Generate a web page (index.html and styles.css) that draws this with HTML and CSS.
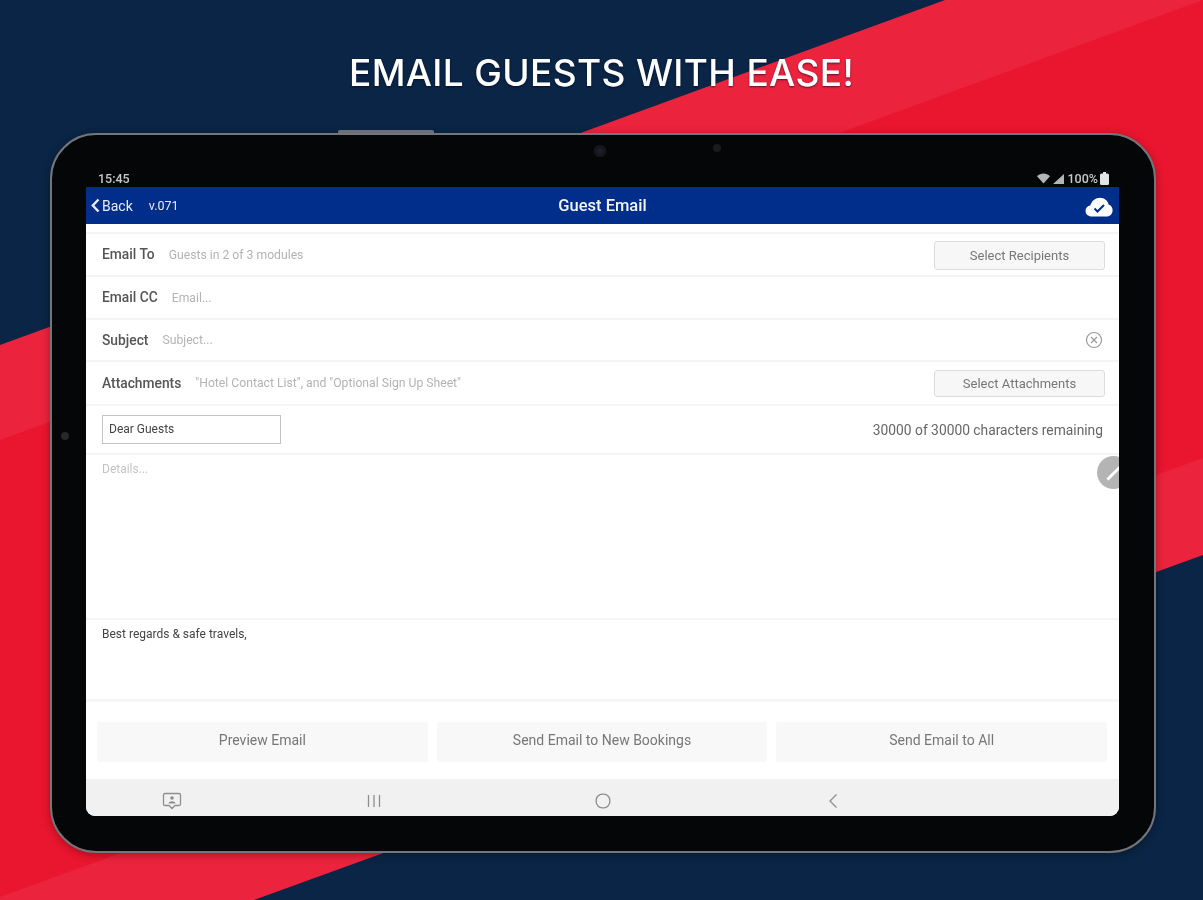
FILE: index.html
```html
<!DOCTYPE html>
<html lang="en">
<head>
<meta charset="utf-8">
<title>Email Guests With Ease</title>
<link rel="stylesheet" href="styles.css">
</head>
<body>
<div class="stage">
  <svg class="backdrop" width="1203" height="900" viewBox="0 0 1203 900" aria-hidden="true">
    <rect class="navy" width="1203" height="900"/>
    <polygon class="red-light" points="945,0 1203,0 1203,555 254,900 0,900 0,345"/>
    <polygon class="red-dark" points="1203,0 1203,458 0,897 0,440"/>
  </svg>
  <h1 class="headline">EMAIL GUESTS WITH EASE!</h1>
  <div class="tablet">
    <span class="side-key"></span>
    <span class="camera"></span>
    <span class="sensor"></span>
    <span class="side-dot"></span>
    <div class="status">
      <span class="time">15:45</span>
      <div class="status-right">
        <svg class="wifi" width="13" height="11" viewBox="0 0 13 11"><path d="M0 3.2C3.6-.4 9.4-.4 13 3.2L6.5 10.5Z"/></svg>
        <svg class="signal" width="11" height="10" viewBox="0 0 11 10"><path d="M11 0V10H0Z"/></svg>
        <span class="pct">100%</span>
        <svg class="battery" width="9" height="13" viewBox="0 0 9 13"><path d="M3 0H6V1.500H7.500Q9 1.500 9 3V11.500Q9 13 7.500 13H1.500Q0 13 0 11.500V3Q0 1.500 1.500 1.500H3Z"/></svg>
      </div>
    </div>
    <div class="screen">
      <header class="appbar">
        <div class="appbar-left">
          <svg class="chevron" width="9" height="15" viewBox="0 0 9 15"><path d="M7.500 1.500 1.800 7.500 7.500 13.500"/></svg>
          <span class="back">Back</span>
          <span class="version">v.071</span>
        </div>
        <div class="appbar-title">Guest Email</div>
        <div class="appbar-right">
          <svg width="28" height="20" viewBox="0 0 28 20"><path class="cloud" d="M7 19.500C3 19.500.5 17 .5 14c0-2.800 2-5 4.800-5.400C6.500 4 10.500.8 15 .8c4.300 0 7.600 2.800 8.600 6.700 2.500.8 4 3 4 5.700 0 3.500-2.500 6.300-6 6.300Z"/><path class="cloud-check" d="M9.500 11.500l3 3 6.500-6.500"/></svg>
        </div>
      </header>
      <div class="top-gap"></div>
      <div class="row row-a">
        <span class="label">Email To</span>
        <span class="value">Guests in 2 of 3 modules</span>
        <button class="pick pick-a">Select Recipients</button>
      </div>
      <div class="row row-a">
        <span class="label">Email CC</span>
        <span class="value">Email...</span>
      </div>
      <div class="row row-b">
        <span class="label">Subject</span>
        <span class="value">Subject...</span>
        <svg class="clear" width="18" height="18" viewBox="0 0 18 18"><circle cx="9" cy="9" r="7.500"/><path d="M6 6l6 6M12 6l-6 6"/></svg>
      </div>
      <div class="row row-c">
        <span class="label">Attachments</span>
        <span class="value">"Hotel Contact List", and "Optional Sign Up Sheet"</span>
        <button class="pick pick-b">Select Attachments</button>
      </div>
      <div class="row row-d">
        <div class="greeting">Dear Guests</div>
        <span class="remaining">30000 of 30000 characters remaining</span>
      </div>
      <div class="details">Details...</div>
      <div class="signature">Best regards &amp; safe travels,</div>
      <div class="actions">
        <button class="action">Preview Email</button>
        <button class="action">Send Email to New Bookings</button>
        <button class="action">Send Email to All</button>
      </div>
      <nav class="navbar">
        <span class="nav-cell nav-1"><svg width="20" height="18" viewBox="0 0 20 18"><path class="nav-stroke" d="M3 1.500H17Q18.500 1.500 18.500 3V12Q18.500 13.500 17 13.500H13L10 16.500 7 13.500H3Q1.500 13.500 1.500 12V3Q1.500 1.500 3 1.500Z"/><circle class="nav-fill" cx="10" cy="6" r="1.800"/><path class="nav-fill" d="M6.500 11.500C7 8.500 13 8.500 13.500 11.500Z"/></svg></span>
        <span class="nav-cell nav-2"><svg width="16" height="14" viewBox="0 0 16 14"><path class="nav-stroke" d="M2.500 1V13M8 1V13M13.500 1V13"/></svg></span>
        <span class="nav-cell nav-3"><svg width="16" height="16" viewBox="0 0 16 16"><rect class="nav-stroke" x="1.200" y="1.200" width="13.600" height="13.600" rx="6"/></svg></span>
        <span class="nav-cell nav-4"><svg width="10" height="16" viewBox="0 0 10 16"><path class="nav-stroke" d="M8.500 1.500 2 8l6.500 6.500"/></svg></span>
      </nav>
      <div class="fab"><svg width="18" height="18" viewBox="0 0 18 18"><path class="fab-bar" d="M2.500 15.500 15 3"/></svg></div>
    </div>
  </div>
</div>
</body>
</html>
```
FILE: styles.css
```css
* { box-sizing: border-box; }
html, body { margin: 0; padding: 0; }
body { font-family: Roboto, "Liberation Sans", sans-serif; background: #0a2545; }
.stage { position: relative; width: 1203px; height: 900px; overflow: hidden; padding-top: 51px; }
.backdrop { position: absolute; left: 0; top: 0; }
.navy { fill: #0a2545; }
.red-light { fill: #ec233d; }
.red-dark { fill: #ea152e; }

.headline {
  position: relative;
  margin: 0;
  height: 43px;
  line-height: 43px;
  text-align: center;
  font-family: Inter, "Open Sans", sans-serif;
  font-weight: 500;
  font-size: 37px;
  letter-spacing: .35px;
  color: #fff;
  text-shadow: 0 1px 2px rgba(0, 0, 40, .6);
  filter: blur(.4px);
}

.tablet {
  position: relative;
  width: 1106px;
  height: 720px;
  margin: 39px 0 0 50px;
  border: 2px solid #72767b;
  border-radius: 46px;
  background: #050607;
  box-shadow: 0 2px 8px rgba(0, 0, 0, .3);
}
.side-key { position: absolute; left: 286px; top: -5px; width: 96px; height: 3px; background: #6d7176; border-radius: 2px 2px 0 0; }
.camera { position: absolute; left: 542px; top: 10px; width: 12px; height: 12px; border-radius: 50%; background: #1c1c2c; box-shadow: inset 0 0 0 3px #16161d; }
.sensor { position: absolute; left: 661px; top: 9px; width: 8px; height: 8px; border-radius: 50%; background: #1b1b1d; }
.side-dot { position: absolute; left: 9px; top: 297px; width: 8px; height: 8px; border-radius: 50%; background: #26282a; }

.status {
  display: flex;
  justify-content: space-between;
  align-items: center;
  height: 17px;
  margin: 35px 0 0 46px;
  padding-right: 45px;
  color: #c9c9c9;
  font-size: 12.500px;
  filter: blur(.6px);
}
.status-right { display: flex; align-items: center; gap: 3px; }
.wifi, .signal, .battery { fill: #b5b5b5; }
.battery { fill: #e4e4e4; margin-left: -1px; }
.pct { font-weight: 500; }
.time { font-weight: 500; }

.screen {
  position: relative;
  width: 1033px;
  height: 629px;
  margin-left: 34px;
  background: #fff;
  border-radius: 0 0 9px 9px;
  overflow: hidden;
}
.screen > * { filter: blur(.6px); }

.appbar {
  display: grid;
  grid-template-columns: 1fr auto 1fr;
  align-items: center;
  height: 37px;
  background: #002e8a;
  color: #e9edf7;
}
.appbar-left { display: flex; align-items: center; padding-left: 5px; }
.chevron { fill: none; stroke: #e9edf7; stroke-width: 2.400; }
.back { margin-left: 2px; font-size: 14px; }
.version { margin-left: 16px; font-size: 12.500px; }
.appbar-title { font-size: 16.500px; font-weight: 500; color: #f3f5fb; }
.appbar-right { display: flex; justify-content: flex-end; padding: 3px 6px 0 0; }
.cloud { fill: #fff; }
.cloud-check { fill: none; stroke: #002e8a; stroke-width: 2; }

.top-gap { height: 10px; border-bottom: 2px solid #f4f4f4; }

.row { display: flex; align-items: center; padding: 0 14px 0 16px; border-bottom: 2px solid #f4f4f4; }
.row-a { height: 43px; }
.row-b { height: 42px; }
.row-c { height: 44px; }
.row-d { height: 49px; }
.label { font-size: 13.800px; font-weight: 500; color: #555; margin-top: -1px; }
.value { margin-left: 14px; font-size: 12.200px; color: #b3b3b3; white-space: nowrap; }
.pick {
  width: 171px;
  margin-left: auto;
  padding: 0;
  font: 13px Roboto, "Liberation Sans", sans-serif;
  color: #777;
  background: #f7f7f7;
  border: 1px solid #dcdcdc;
  border-radius: 3px;
}
.pick-a { height: 29px; margin-top: 1px; }
.pick-b { height: 27px; }
.clear { margin-left: auto; margin-right: 2px; fill: none; stroke: #9a9a9a; stroke-width: 1.200; }

.greeting {
  width: 179px;
  height: 29px;
  padding-left: 6px;
  line-height: 26px;
  font-size: 12px;
  color: #444;
  border: 1.500px solid #c4c4c4;
}
.remaining { margin-left: auto; margin-right: 2px; font-size: 13.800px; color: #666; }

.details {
  height: 165px;
  padding: 7px 16px 0;
  font-size: 12px;
  color: #c4c4c4;
  border-bottom: 2px solid #f4f4f4;
}
.signature {
  height: 82px;
  padding: 7px 16px 0;
  font-size: 12px;
  color: #444;
  border-bottom: 3px solid #f6f6f6;
}

.actions { display: flex; gap: 9px; height: 77px; padding: 20px 12px 17px 11px; }
.action {
  flex: 1;
  padding: 0 0 4px;
  font: 14px Roboto, "Liberation Sans", sans-serif;
  color: #777;
  background: #f8f8f8;
  border: 0;
  border-radius: 2px;
}

.navbar { display: flex; height: 37px; background: #f1f1f1; }
.nav-cell { display: flex; align-items: center; justify-content: center; padding-top: 6px; }
.nav-1 { width: 172px; }
.nav-2 { width: 232px; }
.nav-3 { width: 226px; }
.nav-4 { width: 234px; }
.nav-stroke { fill: none; stroke: #8e8e8e; stroke-width: 1.300; }
.nav-fill { fill: #8e8e8e; }

.fab {
  position: absolute;
  left: 1011px;
  top: 269px;
  display: flex;
  align-items: center;
  justify-content: center;
  width: 33px;
  height: 33px;
  border-radius: 50%;
  background: #b4b4b4;
}
.fab-bar { fill: none; stroke: #fff; stroke-width: 3; }
```
